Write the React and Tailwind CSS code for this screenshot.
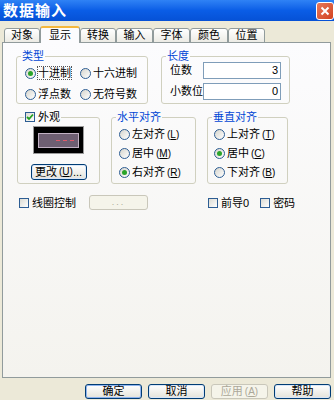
import React from 'react';

const Radio = ({ checked, children, focus }) => (
  <div className="flex items-center h-[12px] whitespace-nowrap">
    <span className="w-[11px] h-[11px] rounded-full border border-[#2d5d93] bg-gradient-to-br from-[#d6d5cd] to-white flex items-center justify-center shrink-0">
      {checked && <span className="w-[5px] h-[5px] rounded-full bg-[#2aa52a]" />}
    </span>
    <span className={`ml-[2px] leading-[12px] ${focus ? 'outline outline-1 outline-dotted outline-[#555]' : ''}`}>{children}</span>
  </div>
);

const Check = ({ checked, children }) => (
  <div className="flex items-center h-[12px] whitespace-nowrap">
    <span className="w-[10px] h-[10px] border border-[#2d5d93] bg-gradient-to-br from-[#dcdbd3] to-white flex items-center justify-center shrink-0">
      {checked && (
        <svg width="8" height="8" viewBox="0 0 8 8">
          <path d="M1 4 L3 6 L7 1.5" stroke="#21a121" strokeWidth="1.8" fill="none" />
        </svg>
      )}
    </span>
    <span className="ml-[3px] leading-[12px]">{children}</span>
  </div>
);

const Key = ({ k }) => (
  <span className="text-[10px] ml-[2px]">(<u>{k}</u>)</span>
);

const Group = ({ legend, className, children }) => (
  <fieldset className={`border border-[#d0d0bf] rounded-[3px] ${className}`}>
    <legend className="ml-[4px] px-[1px] leading-[12px] text-[#0046d5]">{legend}</legend>
    {children}
  </fieldset>
);

const Btn = ({ children, def, disabled, className = '' }) => (
  <div
    className={`h-[15px] rounded-[3px] border flex items-center justify-center leading-none whitespace-nowrap ${
      disabled
        ? 'border-[#c9c7ba] bg-[#f5f4ea] text-[#aca899]'
        : `border-[#003c74] bg-gradient-to-b from-white to-[#e4e3da] ${def ? 'shadow-[inset_0_0_0_1px_#8fb4ee]' : 'shadow-[inset_0_0_0_1px_#d8e6f8]'}`
    } ${className}`}
  >
    {children}
  </div>
);

const tabs = [
  { label: '对象', w: 'w-[36px]' },
  { label: '显示', w: 'w-[40px]', active: true },
  { label: '转换', w: 'w-[36px]' },
  { label: '输入', w: 'w-[37px]' },
  { label: '字体', w: 'w-[37px]' },
  { label: '颜色', w: 'w-[38px]' },
  { label: '位置', w: 'w-[37px]' },
];

export default function App() {
  return (
    <div className="w-[334px] h-[400px] bg-[#ece9d8] overflow-hidden flex flex-col text-[11px] text-black font-['Liberation_Sans','Noto_Sans_CJK_SC',sans-serif]">
      {/* title bar */}
      <div className="h-[21px] shrink-0 flex items-center justify-between pl-[3px] bg-gradient-to-b from-[#2f82f5] via-[#0a5de6] to-[#0651d6]">
        <span className="text-white font-bold text-[15px] leading-none tracking-[1px]">数据输入</span>
        <div className="w-[18px] h-[18px] rounded-[3px] border border-white bg-gradient-to-br from-[#e8785a] to-[#d2401c] flex items-center justify-center">
          <svg width="10" height="10" viewBox="0 0 10 10">
            <path d="M1.5 1.5 L8.5 8.5 M8.5 1.5 L1.5 8.5" stroke="white" strokeWidth="2" />
          </svg>
        </div>
      </div>

      <div className="pl-[2px] pr-[3px] pt-[5px] flex flex-col">
        {/* tabs */}
        <div className="flex items-end h-[17px] -mb-px pl-[2px]">
          {tabs.map((t) =>
            t.active ? (
              <div
                key={t.label}
                className={`${t.w} h-[17px] relative z-10 bg-[#fcfcfe] border-x border-[#919b9c] border-t-2 border-t-[#f5b83d] rounded-t-[3px] flex items-center justify-center leading-none`}
              >
                {t.label}
              </div>
            ) : (
              <div
                key={t.label}
                className={`${t.w} h-[15px] border border-[#919b9c] rounded-t-[3px] bg-gradient-to-b from-white to-[#ecebe5] flex items-center justify-center leading-none pb-[1px]`}
              >
                {t.label}
              </div>
            )
          )}
        </div>

        {/* panel */}
        <div className="h-[336px] border border-[#919b9c] bg-gradient-to-b from-[#fcfcfe] to-[#f4f3ee] pt-[7px] flex flex-col">
          <div className="flex pl-[13px] gap-[13px]">
            <Group legend="类型" className="w-[132px] h-[54px]">
              <div className="grid grid-cols-[55px_1fr] gap-y-[9px] pl-[8px] pt-[5px]">
                <Radio checked focus>十进制</Radio>
                <Radio>十六进制</Radio>
                <Radio>浮点数</Radio>
                <Radio>无符号数</Radio>
              </div>
            </Group>
            <Group legend="长度" className="w-[128px] h-[54px]">
              <div className="flex flex-col gap-[4px] pl-[8px] pr-[8px]">
                <div className="flex items-center justify-between">
                  <span className="whitespace-nowrap">位数</span>
                  <div className="w-[78px] h-[17px] shrink-0 border border-[#7f9db9] bg-white text-right pr-[2px] leading-[15px]">3</div>
                </div>
                <div className="flex items-center justify-between">
                  <span className="whitespace-nowrap">小数位</span>
                  <div className="w-[78px] h-[17px] shrink-0 border border-[#7f9db9] bg-white text-right pr-[2px] leading-[15px]">0</div>
                </div>
              </div>
            </Group>
          </div>

          <div className="flex pl-[14px] gap-[11px] mt-[7px]">
            <fieldset className="border border-[#d0d0bf] rounded-[3px] w-[83px] h-[73px]">
              <legend className="ml-[6px] px-[1px]">
                <Check checked>外观</Check>
              </legend>
              <div className="flex flex-col items-center pt-[3px]">
                <div className="w-[51px] h-[28px] bg-black border border-[#9a9a9a] flex items-center justify-center">
                  <div className="w-[41px] h-[15px] bg-[#6e5f72] border border-[#c2b2c4] flex items-center justify-end pr-[4px] gap-[3px]">
                    <span className="w-[4px] h-[1px] bg-[#e05a6a]" />
                    <span className="w-[4px] h-[1px] bg-[#e05a6a]" />
                    <span className="w-[4px] h-[1px] bg-[#e05a6a]" />
                  </div>
                </div>
                <Btn className="w-[56px] h-[16px] mt-[10px]">
                  更改<Key k="U" />...
                </Btn>
              </div>
            </fieldset>
            <Group legend="水平对齐" className="w-[85px] h-[73px]">
              <div className="flex flex-col gap-[7px] pl-[7px] pt-[5px]">
                <Radio>左对齐<Key k="L" /></Radio>
                <Radio>居中<Key k="M" /></Radio>
                <Radio checked>右对齐<Key k="R" /></Radio>
              </div>
            </Group>
            <Group legend="垂直对齐" className="w-[81px] h-[73px]">
              <div className="flex flex-col gap-[7px] pl-[6px] pt-[5px]">
                <Radio>上对齐<Key k="T" /></Radio>
                <Radio checked>居中<Key k="C" /></Radio>
                <Radio>下对齐<Key k="B" /></Radio>
              </div>
            </Group>
          </div>

          <div className="flex items-center h-[15px] mt-[11px] pl-[16px]">
            <Check>线圈控制</Check>
            <Btn disabled className="w-[59px] ml-[13px] text-[9px] tracking-[2px]">...</Btn>
            <div className="ml-[60px]">
              <Check>前导0</Check>
            </div>
            <div className="ml-[11px]">
              <Check>密码</Check>
            </div>
          </div>
        </div>

        {/* dialog buttons */}
        <div className="flex justify-end gap-[6px] mt-[6px] pr-0">
          <Btn def className="w-[57px]">确定</Btn>
          <Btn className="w-[57px]">取消</Btn>
          <Btn disabled className="w-[57px]">应用<Key k="A" /></Btn>
          <Btn className="w-[57px]">帮助</Btn>
        </div>
      </div>
    </div>
  );
}
